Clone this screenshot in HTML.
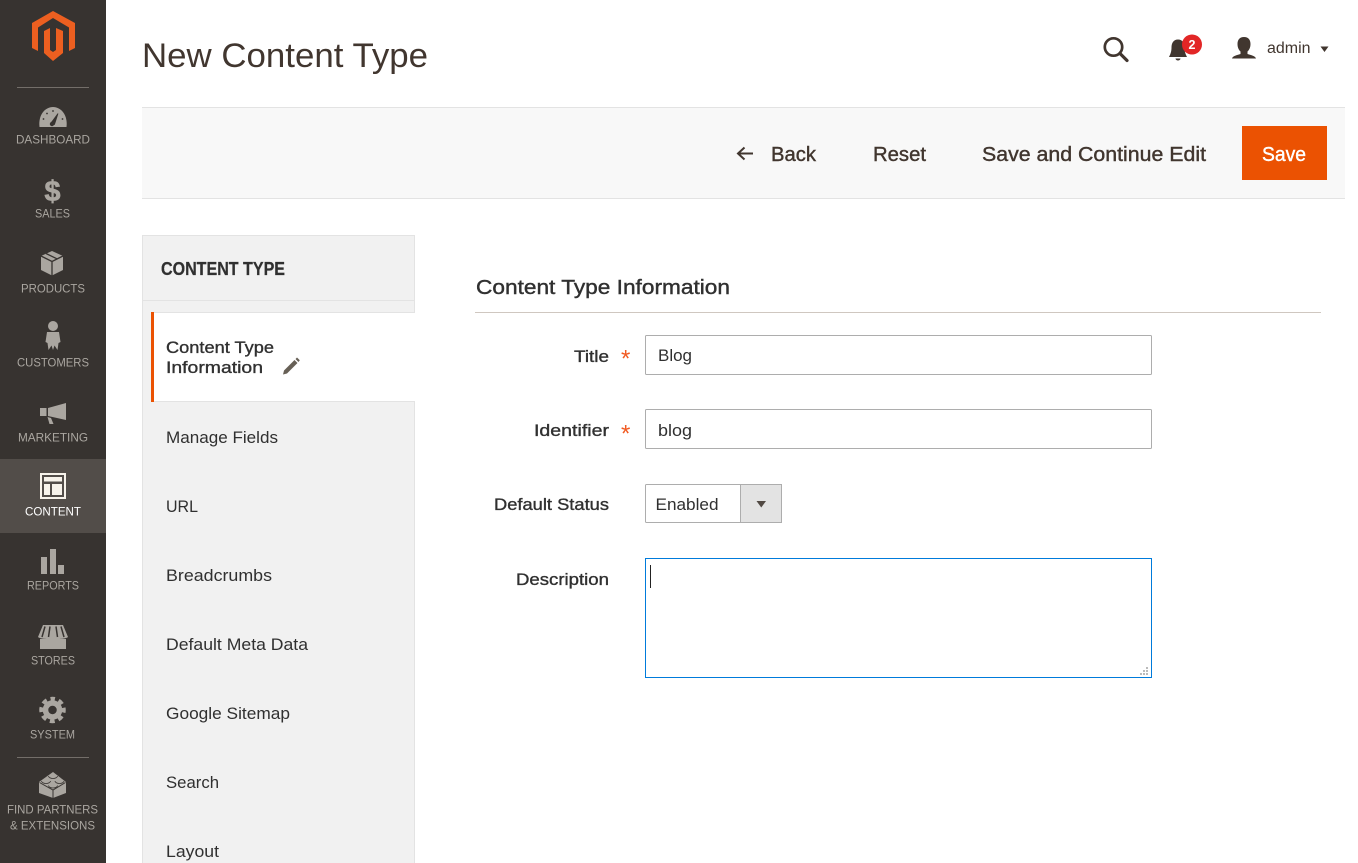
<!DOCTYPE html>
<html lang="en"><head><meta charset="utf-8"><title>New Content Type</title>
<style>
html,body{margin:0;padding:0;background:#fff;width:1358px;height:863px;overflow:hidden}
svg{display:block;position:absolute;left:0;top:0}
text{font-family:"Liberation Sans",Arial,sans-serif}
.n{font-size:12px;fill:#aaa6a0}
.m{font-size:16.5px;fill:#303030}
.l{font-size:16.5px;fill:#303030;stroke:#303030;stroke-width:.35px}
.a{font-size:20px;fill:#41362f;stroke:#41362f;stroke-width:.4px}
.i{font-size:17px;fill:#303030}
.s{font-size:24px;fill:#f15a22}
</style></head><body>
<svg width="1358" height="863" viewBox="0 0 1358 863" xmlns="http://www.w3.org/2000/svg">
<rect width="1358" height="863" fill="#fff"/>
<!-- sidebar -->
<rect width="106" height="863" fill="#373330"/>
<rect y="459" width="106" height="74" fill="#524d49"/>
<path fill="#ec5f20" d="M53 11L75 23V48L69 51V27.500L53 18 38 27.500V51L32 48V23Z"/>
<path fill="#ec5f20" d="M44 31L50 28V50L53 52 56 50V28L63 31V53L53 61 44 53Z"/>
<rect x="17" y="87" width="72" height="1" fill="#736e69"/>
<rect x="17" y="757" width="72" height="1" fill="#736e69"/>
<g fill="#aaa6a0">
<path d="M39.500 127C38 115 45 107 53 107S68 115 66.500 127Z"/>
<path d="M51 123L58 113.500 54.500 124.500Z" fill="#373330" stroke="#373330" stroke-width=".8"/>
<circle cx="52" cy="124" r="2.200" fill="#373330"/>
<g fill="#373330"><circle cx="43.500" cy="119" r=".9"/><circle cx="47" cy="113.500" r=".9"/><circle cx="53" cy="111" r=".9"/><circle cx="62.500" cy="119" r=".9"/></g>
<text x="44.500" y="201" font-size="29" font-weight="700" textLength="16" lengthAdjust="spacingAndGlyphs" style="fill:#aaa6a0;stroke:#aaa6a0;stroke-width:.7px">$</text>
<path d="M52 251L63 256V270L52 275.500 41 270V256Z"/>
<path d="M41 256L52 261.500 63 256M52 261.500V275.500M46 253.500L57 258.800" fill="none" stroke="#373330" stroke-width="1.300"/>
<circle cx="53" cy="326" r="5"/>
<path d="M47 332H59L60.500 342 58.500 343 57.500 350 54.500 345.500 53 350 51.500 345.500 48.500 350 47.500 343 45.500 342Z"/>
<path d="M48 408L66 403V420L48 416Z"/>
<rect x="40" y="408" width="6.500" height="8"/>
<path d="M47.500 417L51 418 53.500 424H49.500Z"/>
<rect x="41" y="557" width="6" height="17"/>
<rect x="50" y="549" width="6" height="25"/>
<rect x="58" y="565" width="6" height="9"/>
<path d="M43 625H63L68 637C66 640 40 640 38 637Z"/>
<path d="M45 626.500L42 637M50 626.500L48.500 637M56 626.500L57.500 637M61 626.500L64 637" stroke="#373330" stroke-width="1.500"/>
<path d="M40 639H66V649H40Z"/>
<circle cx="52.500" cy="710" r="7" fill="none" stroke="#aaa6a0" stroke-width="5.500"/>
<circle cx="52.500" cy="710" r="11" fill="none" stroke="#aaa6a0" stroke-width="4.500" stroke-dasharray="4.800 3.840" stroke-dashoffset="2.400" transform="rotate(-90 52.500 710)"/>
<path d="M53 772L66 782V793L53 798 39 793V782Z"/>
<path d="M39.500 782.500L53 790 65.500 782.500M53 790V798" fill="none" stroke="#373330" stroke-width="1"/>
<path d="M48.500 776a4.500 2.500 0 0 0 9 0M41.500 781a4.500 2.500 0 0 0 9 0M55 781a4.500 2.500 0 0 0 9 0M48.500 785.500a4.500 2.500 0 0 0 9 0" fill="none" stroke="#373330" stroke-width=".8"/>
</g>
<g fill="#f7f3eb">
<path fill-rule="evenodd" d="M40 473H66V499H40ZM42 475V497H64V475Z"/>
<rect x="44" y="477" width="18" height="4.500"/>
<rect x="44" y="484" width="6" height="11"/>
<rect x="52" y="484" width="10" height="11"/>
</g>
<g class="navtext">
<text class="n" x="16" y="143.500" textLength="74" lengthAdjust="spacingAndGlyphs">DASHBOARD</text>
<text class="n" x="35" y="217.500" textLength="35" lengthAdjust="spacingAndGlyphs">SALES</text>
<text class="n" x="21" y="292.500" textLength="64" lengthAdjust="spacingAndGlyphs">PRODUCTS</text>
<text class="n" x="17" y="366.500" textLength="72" lengthAdjust="spacingAndGlyphs">CUSTOMERS</text>
<text class="n" x="18" y="441.500" textLength="70" lengthAdjust="spacingAndGlyphs">MARKETING</text>
<text class="n" x="25" y="515.500" textLength="56" lengthAdjust="spacingAndGlyphs" style="fill:#fff">CONTENT</text>
<text class="n" x="27" y="589.500" textLength="52" lengthAdjust="spacingAndGlyphs">REPORTS</text>
<text class="n" x="31" y="664.500" textLength="44" lengthAdjust="spacingAndGlyphs">STORES</text>
<text class="n" x="30" y="738.500" textLength="45" lengthAdjust="spacingAndGlyphs">SYSTEM</text>
<text class="n" x="7" y="813.500" textLength="91" lengthAdjust="spacingAndGlyphs">FIND PARTNERS</text>
<text class="n" x="10" y="829.500" textLength="85" lengthAdjust="spacingAndGlyphs">&amp; EXTENSIONS</text>
</g>
<!-- header -->
<text x="142" y="67" font-size="34" textLength="286" lengthAdjust="spacingAndGlyphs" style="fill:#41362f">New Content Type</text>
<circle cx="1113.500" cy="47" r="8.700" fill="none" stroke="#41362f" stroke-width="2.700"/>
<path d="M1120 53.500L1127 60.500" stroke="#41362f" stroke-width="3.200" stroke-linecap="round"/>
<path d="M1178 39.500c-4.500 0-6.500 3.500-6.500 8 0 4-1 6.500-2.500 9.500h18c-1.500-3-2.500-5.500-2.500-9.500 0-4.500-2-8-6.500-8Z" fill="#41362f"/>
<path d="M1175.500 58.500h5a2.500 2 0 0 1-5 0Z" fill="#41362f"/>
<circle cx="1192" cy="44.500" r="10" fill="#e22626"/>
<text x="1192" y="49" font-size="12.500" font-weight="700" text-anchor="middle" style="fill:#fff">2</text>
<path d="M1244 37c-4.500 0-6.500 3-6.500 7 0 3.500 1.300 6 3 7.500v2.500c-3 1.200-7.700 1.500-8.500 4.500h24c-.8-3-5.500-3.300-8.500-4.500v-2.500c1.700-1.500 3-4 3-7.500 0-4-2-7-6.500-7Z" fill="#41362f"/>
<text x="1267" y="53" font-size="15.500" textLength="43.500" lengthAdjust="spacingAndGlyphs" style="fill:#41362f">admin</text>
<path d="M1320.500 46.500h8l-4 5.500Z" fill="#41362f"/>
<!-- action bar -->
<rect x="142" y="107" width="1203" height="92" fill="#f8f8f8"/>
<rect x="142" y="107" width="1203" height="1" fill="#e3e3e3"/>
<rect x="142" y="198" width="1203" height="1" fill="#e3e3e3"/>
<path d="M753 153.500H739M744.500 147.500L738 153.500 744.500 159.500" fill="none" stroke="#41362f" stroke-width="2"/>
<text class="a" x="771" y="161" textLength="45" lengthAdjust="spacingAndGlyphs">Back</text>
<text class="a" x="873" y="161" textLength="53" lengthAdjust="spacingAndGlyphs">Reset</text>
<text class="a" x="982" y="161" textLength="224" lengthAdjust="spacingAndGlyphs">Save and Continue Edit</text>
<rect x="1242" y="126" width="85" height="54" fill="#eb5202"/>
<text class="a" x="1262" y="161" textLength="44" lengthAdjust="spacingAndGlyphs" style="fill:#fff;stroke:#fff">Save</text>
<!-- side panel -->
<rect x="142" y="235" width="273" height="628" fill="#f1f1f1"/>
<rect x="142" y="235" width="273" height="1" fill="#e3e3e3"/>
<rect x="142" y="235" width="1" height="628" fill="#e3e3e3"/>
<rect x="414" y="235" width="1" height="628" fill="#e3e3e3"/>
<rect x="142" y="300" width="273" height="1" fill="#e3e3e3"/>
<text x="161" y="275" font-size="18" font-weight="700" textLength="124" lengthAdjust="spacingAndGlyphs" style="fill:#303030;stroke:#303030;stroke-width:.25px">CONTENT TYPE</text>
<rect x="151" y="312" width="264" height="90" fill="#fff"/>
<rect x="151" y="312" width="264" height="1" fill="#e3e3e3"/>
<rect x="151" y="401" width="264" height="1" fill="#e3e3e3"/>
<rect x="151" y="312" width="3" height="90" fill="#eb5202"/>
<text class="l" x="166" y="353" textLength="108" lengthAdjust="spacingAndGlyphs">Content Type</text>
<text class="l" x="166" y="373" textLength="97" lengthAdjust="spacingAndGlyphs">Information</text>
<path d="M283 374.500L284 370.500 294.500 360 297.500 363 287 373.500ZM295.500 359L297 357.500 299.800 360.300 298.500 362Z" fill="#676056"/>
<text class="m" x="166" y="443" textLength="112" lengthAdjust="spacingAndGlyphs">Manage Fields</text>
<text class="m" x="166" y="512" textLength="32" lengthAdjust="spacingAndGlyphs">URL</text>
<text class="m" x="166" y="581" textLength="106" lengthAdjust="spacingAndGlyphs">Breadcrumbs</text>
<text class="m" x="166" y="650" textLength="142" lengthAdjust="spacingAndGlyphs">Default Meta Data</text>
<text class="m" x="166" y="719" textLength="124" lengthAdjust="spacingAndGlyphs">Google Sitemap</text>
<text class="m" x="166" y="788" textLength="53" lengthAdjust="spacingAndGlyphs">Search</text>
<text class="m" x="166" y="857" textLength="53" lengthAdjust="spacingAndGlyphs">Layout</text>
<!-- form -->
<text x="476" y="294" font-size="20" textLength="254" lengthAdjust="spacingAndGlyphs" style="fill:#303030;stroke:#303030;stroke-width:.4px">Content Type Information</text>
<rect x="475" y="312" width="846" height="1" fill="#cfc7c0"/>
<text class="l" x="574" y="362" textLength="35" lengthAdjust="spacingAndGlyphs">Title</text>
<text class="s" x="621" y="366.500">*</text>
<rect x="645.500" y="335.500" width="506" height="39" rx="1" fill="#fff" stroke="#adadad"/>
<text class="i" x="658" y="361" textLength="34" lengthAdjust="spacingAndGlyphs">Blog</text>
<text class="l" x="534" y="436" textLength="75" lengthAdjust="spacingAndGlyphs">Identifier</text>
<text class="s" x="621" y="441.500">*</text>
<rect x="645.500" y="409.500" width="506" height="39" rx="1" fill="#fff" stroke="#adadad"/>
<text class="i" x="658" y="436" textLength="34" lengthAdjust="spacingAndGlyphs">blog</text>
<text class="l" x="494" y="510" textLength="115" lengthAdjust="spacingAndGlyphs">Default Status</text>
<rect x="645.500" y="484.500" width="136" height="38" rx="1" fill="#fff" stroke="#adadad"/>
<rect x="740.500" y="484.500" width="41" height="38" fill="#e3e3e3" stroke="#adadad"/>
<path d="M756.500 501H766L761.250 507.500Z" fill="#514943"/>
<text class="i" x="655.500" y="510" textLength="63" lengthAdjust="spacingAndGlyphs">Enabled</text>
<text class="l" x="516" y="585" textLength="93" lengthAdjust="spacingAndGlyphs">Description</text>
<rect x="645.500" y="558.500" width="506" height="119" fill="#fff" stroke="#007bdb"/>
<rect x="650" y="565" width="1" height="23" fill="#222"/>
<g fill="#bbb"><rect x="1146" y="667" width="2" height="2"/><rect x="1143" y="670" width="2" height="2"/><rect x="1146" y="670" width="2" height="2"/><rect x="1140" y="673" width="2" height="2"/><rect x="1143" y="673" width="2" height="2"/><rect x="1146" y="673" width="2" height="2"/></g>
</svg>
</body></html>
